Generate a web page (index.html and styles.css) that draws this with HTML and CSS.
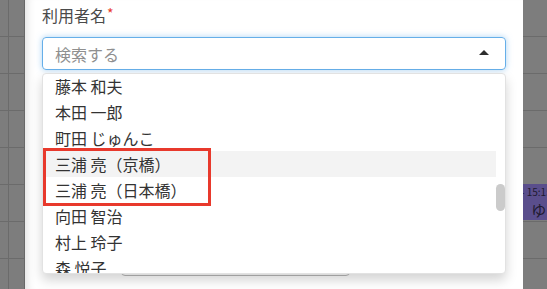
FILE: index.html
```html
<!DOCTYPE html>
<html lang="ja">
<head>
<meta charset="utf-8">
<title>利用者名</title>
<link rel="stylesheet" href="styles.css">
</head>
<body>
<div class="screen">
  <div class="strip strip-left"></div>
  <div class="modal">
    <div class="field">
      <label class="label">利用者名<span class="req">*</span></label>
      <div class="select">
        <div class="select-input">
          <span class="placeholder">検索する</span>
          <span class="caret"></span>
        </div>
        <div class="dropdown">
          <div class="options">
            <div class="option">藤本 和夫</div>
            <div class="option">本田 一郎</div>
            <div class="option">町田 じゅんこ</div>
            <div class="option option-hover">三浦 亮（京橋）</div>
            <div class="option">三浦 亮（日本橋）</div>
            <div class="option">向田 智治</div>
            <div class="option">村上 玲子</div>
            <div class="option">森 悦子</div>
          </div>
          <div class="track"><div class="thumb"></div></div>
        </div>
        <div class="annotation"></div>
      </div>
    </div>
    <div class="field-below">
      <div class="below-box"></div>
    </div>
  </div>
  <div class="strip strip-right">
    <div class="event">
      <div class="event-time">- 15:15</div>
      <div class="event-name">田 ゆ</div>
    </div>
  </div>
</div>
</body>
</html>
```

FILE: styles.css
```css
html, body {
  margin: 0;
  padding: 0;
  background: #7d7d7d;
}

body {
  font-family: "Noto Sans CJK JP", "Noto Sans", sans-serif;
  color: #333;
}

.screen {
  display: grid;
  grid-template-columns: 25px 498px 24px;
  width: 547px;
  height: 289px;
  overflow: hidden;
}

.strip {
  position: relative;
  overflow: hidden;
  background-color: #7d7d7d;
  background-image:
    repeating-linear-gradient(to bottom, transparent 0 36px, #6b6b6b 36px 37px);
}

.strip-left {
  background-image:
    linear-gradient(to right, transparent 8px, #6b6b6b 8px, #6b6b6b 9px, transparent 9px),
    repeating-linear-gradient(to bottom, transparent 0 36px, #6b6b6b 36px 37px);
  border-right: 1px solid #686868;
}

.modal {
  position: relative;
  z-index: 2;
  background: #fff;
  padding: 2px 17px 0 17px;
  box-shadow: inset 9px 0 8px -7px rgba(0, 0, 0, 0.13);
}

.label {
  display: block;
  font-size: 16px;
  line-height: 22px;
  color: #4a4a4a;
  margin-bottom: 11px;
}

.req {
  color: #e8392c;
  font-size: 14px;
  vertical-align: 3px;
  margin-left: 1px;
}

.select {
  position: relative;
  width: 464px;
}

.select-input {
  box-sizing: border-box;
  height: 33px;
  border: 1px solid #66afe9;
  border-radius: 4px;
  box-shadow: 0 0 6px rgba(102, 175, 233, 0.55);
  display: flex;
  align-items: center;
  justify-content: space-between;
  padding: 0 16px 0 12px;
}

.placeholder {
  font-size: 16px;
  line-height: 22px;
  color: #8f8f8f;
}

.caret {
  width: 0;
  height: 0;
  border-left: 5px solid transparent;
  border-right: 5px solid transparent;
  border-bottom: 5px solid #2e2e2e;
  margin-bottom: 2px;
}

.dropdown {
  position: absolute;
  z-index: 3;
  top: 36px;
  left: 0;
  width: 464px;
  height: 201px;
  box-sizing: border-box;
  border: 1px solid #e2e2e2;
  border-radius: 4px;
  background: #fff;
  box-shadow: 0 6px 12px rgba(0, 0, 0, 0.175);
  display: flex;
  overflow: hidden;
}

.options {
  width: 453px;
  margin-top: -1px;
}

.option {
  height: 26px;
  line-height: 26px;
  padding-left: 12px;
  font-size: 16px;
  color: #333;
  white-space: nowrap;
}

.option-hover {
  background: #f3f3f3;
}

.track {
  width: 9px;
}

.thumb {
  margin-top: 110px;
  width: 9px;
  height: 27px;
  border-radius: 5px;
  background: #cbcbcb;
}

.annotation {
  position: absolute;
  z-index: 4;
  left: 1px;
  top: 111px;
  width: 168px;
  height: 58px;
  box-sizing: border-box;
  border: 3px solid #e8392c;
}

.field-below {
  margin-top: 172px;
  padding-left: 79px;
}

.below-box {
  width: 229px;
  height: 34px;
  box-sizing: border-box;
  border: 1px solid #b9b9b9;
  border-radius: 4px;
}

.event {
  position: absolute;
  left: -2px;
  top: 184px;
  width: 40px;
  height: 36px;
  background: #5a4e8c;
  color: #1e1a30;
  white-space: nowrap;
}

.event-time {
  font-size: 10px;
  line-height: 12px;
  padding-top: 2px;
}

.event-name {
  font-size: 15px;
  line-height: 17px;
  margin-top: 3px;
  margin-left: -14px;
  word-spacing: 6px;
}
```
